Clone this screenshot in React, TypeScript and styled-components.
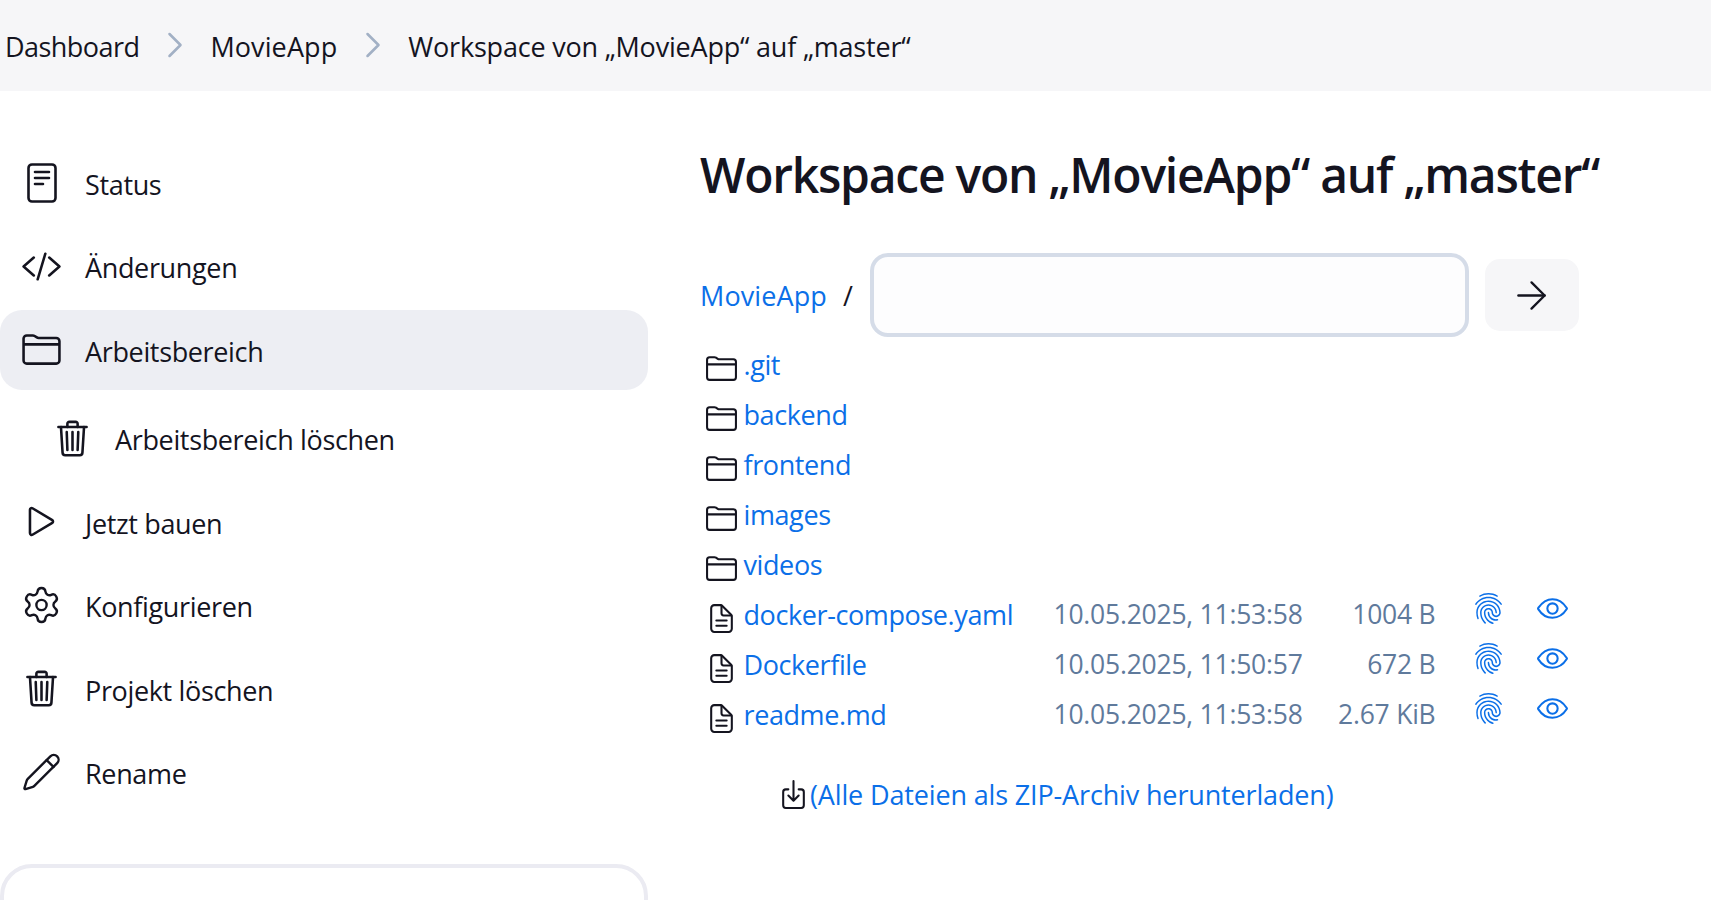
import React from "react";
import styled, { createGlobalStyle } from "styled-components";
import {
  IoCodeSlashOutline,
  IoDocumentTextOutline,
  IoDownloadOutline,
  IoEyeOutline,
  IoFingerPrintOutline,
  IoFolderOutline,
  IoPlayOutline,
  IoTrashOutline,
} from "react-icons/io5";
import { ArrowRight, ChevronRight, Pencil, Settings } from "lucide-react";

const Global = createGlobalStyle`
  html, body { margin: 0; padding: 0; height: 900px; overflow: hidden; background: #fff; }
  body { font-family: "Open Sans", "Noto Sans", sans-serif; font-size: 27px; color: #14141f; }
  * { box-sizing: border-box; }
`;

const Page = styled.div`
  width: 1711px;
  height: 900px;
  overflow: hidden;
  display: flex;
  flex-direction: column;
`;

const Header = styled.header`
  height: 91px;
  flex: none;
  background: #f6f6f8;
  display: flex;
  align-items: center;
  padding: 1px 0 0 5px;
`;

const Crumb = styled.span<{ $track: number }>`
  color: #14141f;
  letter-spacing: ${(p) => p.$track}px;
`;

const CrumbSep = styled.span`
  display: flex;
  color: #a2b0c5;
  margin: -2px 13.5px 0;
`;

const Body = styled.div`
  display: flex;
  flex: 1;
  min-height: 0;
`;

const Sidebar = styled.aside`
  width: 648px;
  flex: none;
  padding-top: 52px;
  display: flex;
  flex-direction: column;
`;

const Task = styled.div<{ $active?: boolean; $indent?: boolean }>`
  height: 79.5px;
  flex: none;
  margin-bottom: ${(p) => (p.$active ? "9px" : "4px")};
  display: flex;
  align-items: center;
  border-radius: 22px;
  background: ${(p) => (p.$active ? "#edeef3" : "transparent")};
  padding-left: ${(p) => (p.$indent ? "52px" : "21px")};
  letter-spacing: -0.35px;
`;

const TaskIcon = styled.span<{ $indent?: boolean }>`
  width: 41px;
  height: 41px;
  flex: none;
  display: flex;
  align-items: center;
  justify-content: center;
  font-size: 45px;
  margin-right: ${(p) => (p.$indent ? "22px" : "23px")};
`;

const TaskLabel = styled.span`
  padding-top: 3px;
`;

const Card = styled.div`
  height: 120px;
  flex: none;
  margin-top: 48px;
  border: 4px solid #ebebf2;
  border-radius: 32px;
`;

const Main = styled.main`
  flex: 1;
  padding: 52px 0 0 52px;
`;

const Title = styled.h1`
  margin: 0 0 46px;
  font-size: 48px;
  line-height: 64px;
  font-weight: 600;
  letter-spacing: -1.24px;
  color: #14141f;
`;

const PathBar = styled.div`
  display: flex;
  align-items: center;
  height: 84px;
`;

const PathLink = styled.a`
  color: #0b6fe8;
  letter-spacing: 0.1px;
  margin-top: 1px;
`;

const Slash = styled.span`
  margin: 1px 17px 0 16px;
`;

const PathInput = styled.input`
  width: 599px;
  height: 84px;
  border: 4px solid #d5dce8;
  border-radius: 18px;
  background: #fdfdfe;
`;

const GoButton = styled.button`
  width: 94px;
  height: 72px;
  margin-left: 16px;
  border: none;
  border-radius: 15px;
  background: #f6f6f8;
  color: #14141f;
  display: flex;
  align-items: center;
  justify-content: center;
  padding: 0;
`;

const Files = styled.div`
  margin-top: 3px;
  display: flex;
  flex-direction: column;
`;

const FileRow = styled.div`
  height: 49.9px;
  flex: none;
  display: grid;
  grid-template-columns: 38.5px 310px 248px 134px 69.5px 64px;
  padding-left: 5px;
  align-items: center;
`;

const RowIcon = styled.span`
  display: flex;
  font-size: 33px;
  color: #14141f;
  margin-top: 8px;
`;

const FileLink = styled.a<{ $track?: number }>`
  color: #0b6fe8;
  letter-spacing: ${(p) => p.$track ?? -0.4}px;
`;

const Meta = styled.span<{ $right?: boolean }>`
  color: #5f7a9c;
  font-size: 26.5px;
  letter-spacing: -0.23px;
  white-space: nowrap;
  text-align: ${(p) => (p.$right ? "right" : "left")};
`;

const Action = styled.span`
  display: flex;
  justify-content: flex-end;
  color: #0b6fe8;
  font-size: 33px;
  margin-top: -12px;
`;

const ZipRow = styled.div`
  display: flex;
  align-items: center;
  margin: 36.5px 0 0 77px;
`;

const ZipIcon = styled.span`
  display: flex;
  font-size: 33px;
  color: #14141f;
`;

function StatusIcon() {
  return (
    <svg width="30" height="40" viewBox="0 0 30 40" fill="none" stroke="currentColor" strokeWidth="2.6" strokeLinecap="round">
      <rect x="1.5" y="1.5" width="27" height="37" rx="3.5" />
      <path d="M8 9h14M8 15h14M8 21h8" />
    </svg>
  );
}

const tasks = [
  { label: "Status", icon: <StatusIcon /> },
  { label: "Änderungen", icon: <IoCodeSlashOutline /> },
  { label: "Arbeitsbereich", icon: <IoFolderOutline />, active: true },
  { label: "Arbeitsbereich löschen", icon: <IoTrashOutline />, indent: true },
  { label: "Jetzt bauen", icon: <IoPlayOutline /> },
  { label: "Konfigurieren", icon: <Settings size={44} strokeWidth={1.4} /> },
  { label: "Projekt löschen", icon: <IoTrashOutline /> },
  { label: "Rename", icon: <Pencil size={42} strokeWidth={1.4} /> },
];

const folders = [".git", "backend", "frontend", "images", "videos"];
const files = [
  { name: "docker-compose.yaml", date: "10.05.2025, 11:53:58", size: "1004 B" },
  { name: "Dockerfile", date: "10.05.2025, 11:50:57", size: "672 B" },
  { name: "readme.md", date: "10.05.2025, 11:53:58", size: "2.67 KiB" },
];

export default function App() {
  return (
    <Page>
      <Global />
      <Header>
        <Crumb $track={-0.55}>Dashboard</Crumb>
        <CrumbSep><ChevronRight size={44} strokeWidth={1.4} /></CrumbSep>
        <Crumb $track={0.1}>MovieApp</Crumb>
        <CrumbSep><ChevronRight size={44} strokeWidth={1.4} /></CrumbSep>
        <Crumb $track={-0.2}>Workspace von „MovieApp“ auf „master“</Crumb>
      </Header>
      <Body>
        <Sidebar>
          {tasks.map((t) => (
            <Task key={t.label} $active={t.active} $indent={t.indent}>
              <TaskIcon $indent={t.indent}>{t.icon}</TaskIcon>
              <TaskLabel>{t.label}</TaskLabel>
            </Task>
          ))}
          <Card />
        </Sidebar>
        <Main>
          <Title>Workspace von „MovieApp“ auf „master“</Title>
          <PathBar>
            <PathLink>MovieApp</PathLink>
            <Slash>/</Slash>
            <PathInput />
            <GoButton><ArrowRight size={45} strokeWidth={1.25} /></GoButton>
          </PathBar>
          <Files>
            {folders.map((f) => (
              <FileRow key={f}>
                <RowIcon><IoFolderOutline /></RowIcon>
                <FileLink>{f}</FileLink>
              </FileRow>
            ))}
            {files.map((f) => (
              <FileRow key={f.name}>
                <RowIcon><IoDocumentTextOutline /></RowIcon>
                <FileLink>{f.name}</FileLink>
                <Meta>{f.date}</Meta>
                <Meta $right>{f.size}</Meta>
                <Action><IoFingerPrintOutline /></Action>
                <Action><IoEyeOutline /></Action>
              </FileRow>
            ))}
          </Files>
          <ZipRow>
            <ZipIcon><IoDownloadOutline /></ZipIcon>
            <FileLink $track={-0.15}>(Alle Dateien als ZIP-Archiv herunterladen)</FileLink>
          </ZipRow>
        </Main>
      </Body>
    </Page>
  );
}
